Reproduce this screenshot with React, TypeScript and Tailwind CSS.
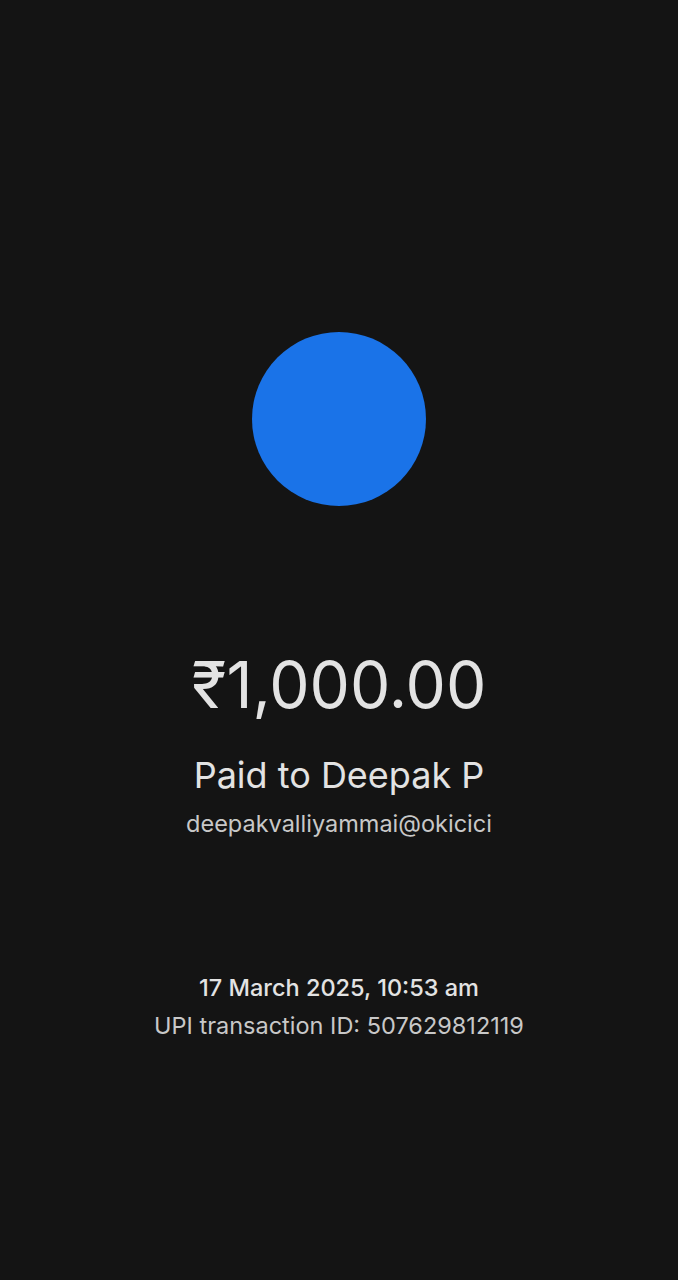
import React from 'react';

const App: React.FC = () => {
  return (
    <div
      className="flex h-[1280px] w-full flex-col items-center bg-[#141414] text-[#e3e3e3]"
      style={{ fontFamily: 'Inter, "Open Sans", sans-serif' }}
    >
      {/* avatar */}
      <div className="mt-[332px] h-[174px] w-[174px] rounded-full bg-[#1a73e8]" />

      {/* amount + payee */}
      <div className="mt-[143px] text-[64px] leading-[72px]">₹1,000.00</div>
      <div className="mt-[32px] text-[36px] leading-[44px]">Paid to Deepak P</div>
      <div className="mt-[11px] text-[23.5px] leading-[32px] text-[#c8c8c8]">deepakvalliyammai@okicici</div>

      {/* transaction info */}
      <div className="mt-[132px] text-[23.5px] font-medium leading-[32px]">17 March 2025, 10:53 am</div>
      <div className="mt-[6px] text-[23.5px] leading-[32px] text-[#c8c8c8]">UPI transaction ID: 507629812119</div>
    </div>
  );
};

export default App;
